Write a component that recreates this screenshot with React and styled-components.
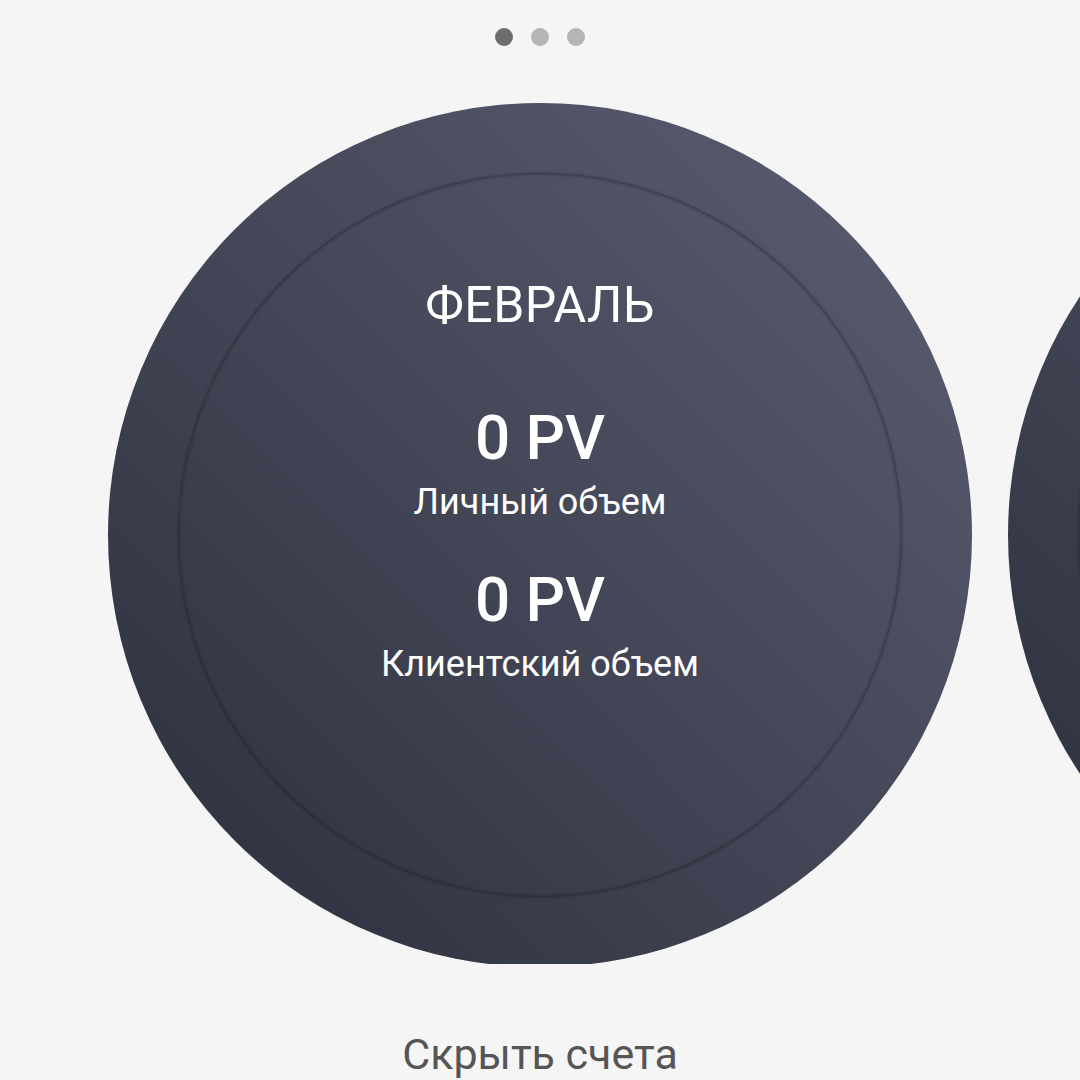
import React from "react";
import styled, { createGlobalStyle } from "styled-components";

const Global = createGlobalStyle`
  html, body { margin: 0; padding: 0; background: #f5f5f5; }
  body { font-family: Roboto, "Noto Sans", sans-serif; }
`;

const Page = styled.div`
  width: 1080px;
  height: 1080px;
  overflow: hidden;
  display: flex;
  flex-direction: column;
  align-items: center;
  background: #f5f5f5;
`;

const Dots = styled.div`
  display: flex;
  gap: 18px;
  margin-top: 28px;
`;

const Dot = styled.span`
  width: 18px;
  height: 18px;
  border-radius: 50%;
  background: ${(p) => (p.$active ? "#6e6e6e" : "#b5b5b5")};
`;

const Track = styled.div`
  width: 1080px;
  display: flex;
  gap: 36px;
  padding-left: 108px;
  box-sizing: border-box;
  margin-top: 57px;
  overflow: hidden;
`;

const Disc = styled.div`
  position: relative;
  flex: 0 0 864px;
  height: 864px;
  border-radius: 50%;
  background: linear-gradient(to bottom left, #5b5f73 0%, #444757 50%, #2a2d3a 100%);
  display: flex;
  flex-direction: column;
  align-items: center;
  color: #ffffff;
  box-sizing: border-box;
  padding-top: 172px;

  &::before {
    content: "";
    position: absolute;
    inset: 70px;
    border-radius: 50%;
    box-shadow: inset 0 0 3px 1px rgba(24, 26, 36, 0.5), 0 0 3px rgba(24, 26, 36, 0.35);
    pointer-events: none;
  }
`;

const Month = styled.div`
  font-size: 50px;
  line-height: 60px;
  font-weight: 400;
  letter-spacing: 0.5px;
`;

const Value = styled.div`
  font-size: 62px;
  line-height: 64px;
  font-weight: 500;
  margin-top: ${(p) => p.$gap}px;
`;

const Caption = styled.div`
  font-size: 36px;
  line-height: 42px;
  font-weight: 400;
  margin-top: 11px;
`;

const HideLink = styled.div`
  margin-top: 64px;
  font-size: 43px;
  line-height: 52px;
  color: #555555;
`;

export default function App() {
  return (
    <>
      <Global />
      <Page>
        <Dots>
          <Dot $active />
          <Dot />
          <Dot />
        </Dots>
        <Track>
          <Disc>
            <Month>ФЕВРАЛЬ</Month>
            <Value $gap={71}>0 PV</Value>
            <Caption>Личный объем</Caption>
            <Value $gap={45}>0 PV</Value>
            <Caption>Клиентский объем</Caption>
          </Disc>
          <Disc />
        </Track>
        <HideLink>Скрыть счета</HideLink>
      </Page>
    </>
  );
}
